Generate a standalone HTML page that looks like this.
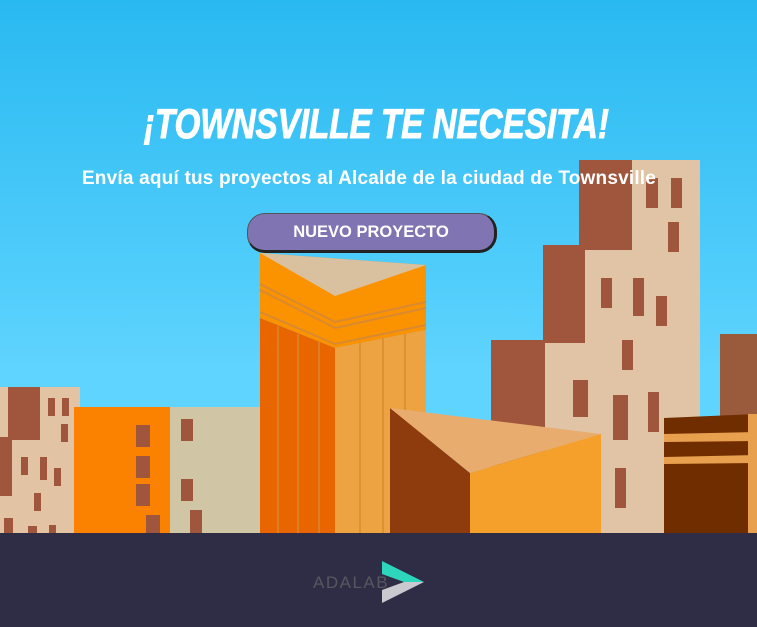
<!DOCTYPE html>
<html><head><meta charset="utf-8"><style>
body{margin:0;width:757px;height:627px;overflow:hidden;font-family:"Liberation Sans",sans-serif}
#sky{position:absolute;left:0;top:0;width:757px;height:533px;background:linear-gradient(#29b9f1,#5fd4fe 70%,#5fd4fe)}
svg{position:absolute;left:0;top:0}
h1{position:absolute;left:0;width:757px;top:100px;margin:0;text-align:center;color:#fff;font-size:42px;font-style:italic;font-weight:bold;transform:scaleX(0.79);transform-origin:368px 0;-webkit-text-stroke:1px #fff}
p{position:absolute;left:0;width:738px;top:168px;margin:0;text-align:center;color:#fff;font-weight:bold;font-size:19px;letter-spacing:0.2px}
.btn{position:absolute;left:247px;top:213px;width:246px;height:36px;background:#8075b2;border-radius:18px;border:1px solid #555;border-right:3px solid #222;border-bottom:3px solid #222;color:#fff;font-weight:bold;font-size:16.5px;line-height:37px;text-align:center}
#foot{position:absolute;left:0;top:533px;width:757px;height:94px;background:#2f2c45}
</style></head><body>
<div id="sky"></div>
<svg width="757" height="627">
<rect x="720" y="334" width="37" height="199" fill="#9a5a3c"/>
<rect x="491" y="340" width="60" height="193" fill="#a0553d"/>
<rect x="543" y="245" width="45" height="100" fill="#a0553d"/>
<rect x="579" y="160" width="55" height="90" fill="#a0553d"/>
<polygon points="632,160 700,160 700,533 545,533 545,343 585,343 585,250 632,250" fill="#e1c4a5"/>
<g fill="#a0553d">
<rect x="646" y="178" width="12" height="30"/><rect x="671" y="178" width="11" height="30"/><rect x="668" y="222" width="11" height="30"/>
<rect x="601" y="278" width="11" height="30"/><rect x="633" y="278" width="11" height="38"/><rect x="656" y="296" width="11" height="30"/>
<rect x="622" y="340" width="11" height="30"/><rect x="573" y="380" width="15" height="37"/><rect x="613" y="395" width="15" height="45"/>
<rect x="648" y="392" width="11" height="40"/><rect x="615" y="468" width="11" height="40"/></g>
<polygon points="664,418 757,414 757,533 664,533" fill="#6f2d00"/>
<polygon points="664,434 757,432 757,441 664,442" fill="#e8a04e"/>
<polygon points="664,457 757,455 757,463 664,464" fill="#e8a04e"/>
<rect x="748" y="414" width="9" height="119" fill="#e8a04e"/>
<rect x="0" y="387" width="80" height="146" fill="#e2c4a5"/>
<rect x="8" y="387" width="32" height="53" fill="#a0553d"/>
<rect x="0" y="437" width="12" height="59" fill="#a0553d"/>
<g fill="#a0553d"><rect x="48" y="398" width="7" height="18"/><rect x="62" y="398" width="7" height="18"/><rect x="61" y="424" width="7" height="18"/>
<rect x="21" y="457" width="7" height="18"/><rect x="40" y="457" width="7" height="23"/><rect x="54" y="468" width="7" height="18"/>
<rect x="34" y="493" width="7" height="18"/><rect x="4" y="518" width="9" height="15"/><rect x="28" y="526" width="9" height="7"/><rect x="49" y="525" width="7" height="8"/></g>
<rect x="74" y="407" width="97" height="126" fill="#fb8200"/>
<rect x="170" y="407" width="90" height="126" fill="#d0c5a5"/>
<g fill="#a0553d"><rect x="136" y="425" width="14" height="22"/><rect x="136" y="456" width="14" height="22"/><rect x="136" y="484" width="14" height="22"/><rect x="146" y="515" width="14" height="18"/>
<rect x="181" y="419" width="12" height="22"/><rect x="181" y="479" width="12" height="22"/><rect x="190" y="510" width="12" height="23"/></g>
<polygon points="260,253 426,265 426,330 335,348 260,318" fill="#fb9300"/>
<polygon points="260,253 426,265 335,296" fill="#d9c09f"/>
<g stroke="#d98a30" stroke-width="2" fill="none"><polyline points="260,284 335,322 426,302"/><polyline points="260,290 335,328 426,308"/><polyline points="260,312 335,344 426,325"/></g>
<polygon points="260,318 335,348 335,533 260,533" fill="#e96500"/>
<polygon points="335,348 426,330 426,533 335,533" fill="#eda342"/>
<g stroke="#d98a30" stroke-width="1.5"><line x1="278" y1="326" x2="278" y2="533"/><line x1="298" y1="334" x2="298" y2="533"/><line x1="319" y1="342" x2="319" y2="533"/><line x1="360" y1="343" x2="360" y2="533"/><line x1="383" y1="338" x2="383" y2="533"/><line x1="405" y1="334" x2="405" y2="533"/></g>
<polygon points="390,408 470,473 470,533 390,533" fill="#8e3b0d"/>
<polygon points="390,408 601,434 470,473" fill="#e8ad6e"/>
<polygon points="470,473 601,434 601,533 470,533" fill="#f4a02a"/>
</svg>
<h1>¡TOWNSVILLE TE NECESITA!</h1>
<p>Envía aquí tus proyectos al Alcalde de la ciudad de Townsville</p>
<div class="btn">NUEVO PROYECTO</div>
<div id="foot"></div>
<svg width="757" height="627">
<text x="313" y="588" font-family="Liberation Sans" font-size="17" fill="#58575f" letter-spacing="1.5">ADALAB</text>
<polygon points="382,561 424,582 404,582 382,574" fill="#2dd5bd"/>
<polygon points="382,603 382,590 404,582 424,582" fill="#c9c9cf"/>
</svg>
</body></html>
